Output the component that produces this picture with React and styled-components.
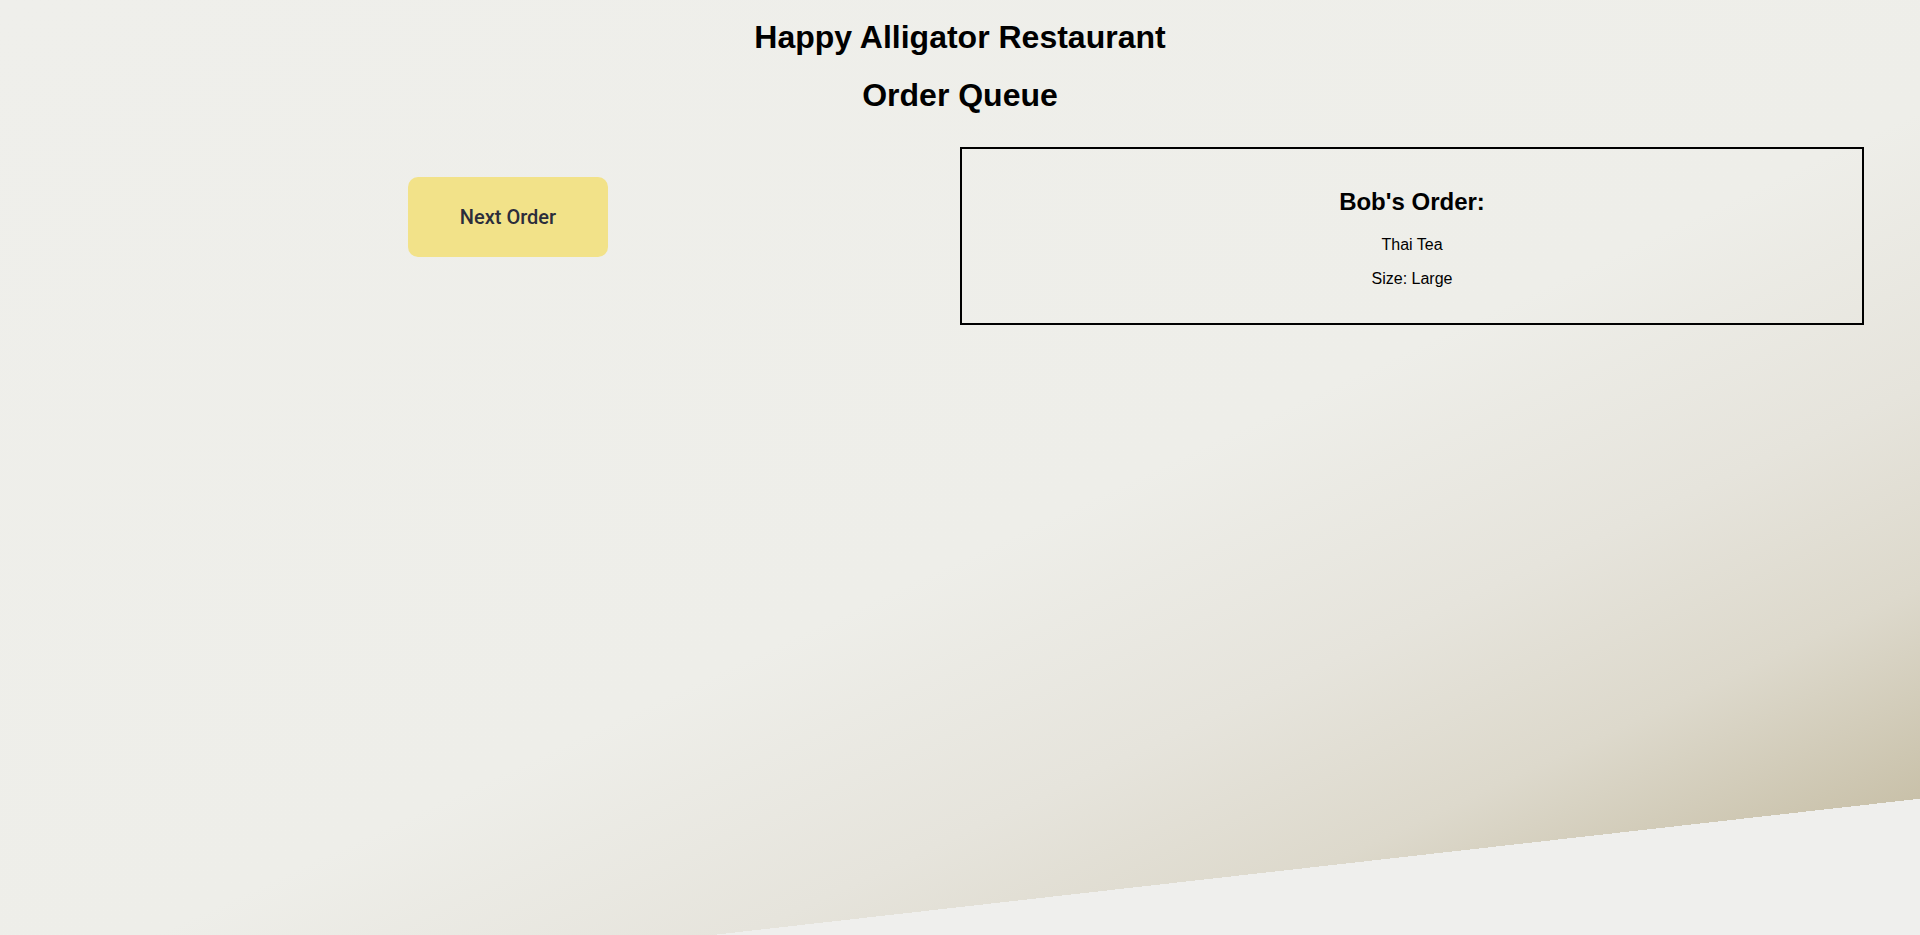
import { createGlobalStyle, styled } from "styled-components"

const GlobalStyle = createGlobalStyle`
    html, body{
        margin: 0;
        padding: 0;
        background-color: #efefed;
    }
    body{
        font-family: "Liberation Sans", Arial, sans-serif;
        color: #000;
    }
`

export default function App(){

    const order = { name: "Bob", drink: "Thai Tea", size: "Large" }

    return(
        <>
            <GlobalStyle />
            <Page>
                <Header>
                    <Titulo>Happy Alligator Restaurant</Titulo>
                    <Titulo>Order Queue</Titulo>
                </Header>
                <Main>
                    <Coluna>
                        <NextButton>Next Order</NextButton>
                    </Coluna>
                    <OrderCard>
                        <OrderName>{order.name}'s Order:</OrderName>
                        <OrderLine>{order.drink}</OrderLine>
                        <OrderLine>Size: {order.size}</OrderLine>
                    </OrderCard>
                </Main>
            </Page>
        </>
    )
}

const Page = styled.div`
    min-height: 100vh;
    box-sizing: border-box;
    background:
        linear-gradient(173.56deg, transparent 1009px, #efefed 1009px),
        linear-gradient(155deg, #efefeb 0%, #eeeee9 55%, #e6e4dc 70%, #ddd9cc 81%, #c8c0a8 93%, #bfb598 100%);
`

const Header = styled.header`
    display: flex;
    flex-direction: column;
    align-items: center;
    gap: 21px;
    padding-top: 19px;
`

const Titulo = styled.h1`
    margin: 0;
    font-size: 32px;
    line-height: 37px;
    font-weight: bold;
`

const Main = styled.main`
    display: grid;
    grid-template-columns: 1fr 1fr;
    align-items: start;
    padding: 0 56px;
    margin-top: 33px;
`

const Coluna = styled.div`
    display: flex;
    justify-content: center;
    padding-top: 30px;
`

const NextButton = styled.button`
    width: 200px;
    height: 80px;
    background-color: #f2e289;
    border: none;
    border-radius: 10px;
    color: #2b2d3b;
    font-family: Roboto, "Liberation Sans", sans-serif;
    font-size: 20px;
    font-weight: 500;
    &:hover{
        cursor: pointer;
        filter: brightness(0.95);
    }
`

const OrderCard = styled.section`
    border: 2px solid #000;
    padding: 19px 20px;
    text-align: center;
`

const OrderName = styled.h2`
    margin: 20px 0;
    font-size: 24px;
    line-height: 27.6px;
    font-weight: bold;
`

const OrderLine = styled.p`
    margin: 16px 0;
    font-size: 16px;
    line-height: 18.4px;
`
